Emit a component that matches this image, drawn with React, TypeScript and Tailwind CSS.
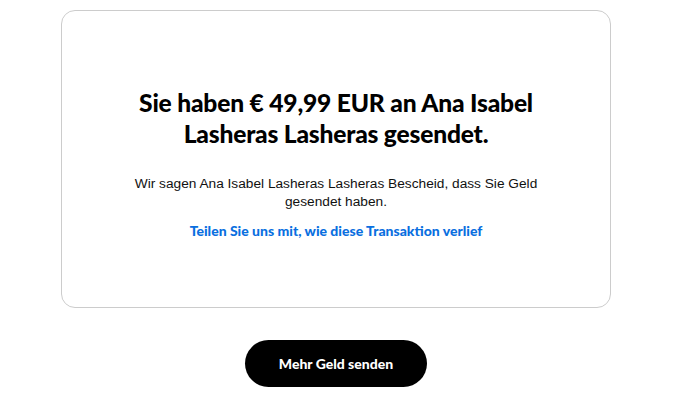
import React from "react";

export default function App() {
  return (
    <div className="w-[672px] flex flex-col items-center pt-[10px] bg-white" style={{ minHeight: 409 }}>
      <div className="w-[550px] h-[298px] border border-[#cccccc] rounded-[14px] flex flex-col items-center pt-[76px]">
        <h1 className="font-['Lato',sans-serif] font-black text-[24.6px] leading-[31px] text-black text-center max-w-[430px] tracking-[-0.2px]">
          Sie haben € 49,99 EUR an Ana Isabel Lasheras Lasheras gesendet.
        </h1>
        <p className="mt-[26px] font-['Liberation_Sans',Arial,sans-serif] text-[13.7px] leading-[18px] text-[#111111] text-center max-w-[420px]">
          Wir sagen Ana Isabel Lasheras Lasheras Bescheid, dass Sie Geld gesendet haben.
        </p>
        <a className="mt-[11px] font-['Lato',sans-serif] font-black text-[14px] leading-[18px] text-[#0a6fe0] text-center">
          Teilen Sie uns mit, wie diese Transaktion verlief
        </a>
      </div>
      <button className="mt-[32px] w-[182px] h-[47px] rounded-full bg-black text-white font-['Lato',sans-serif] font-black text-[14px] flex items-center justify-center">
        Mehr Geld senden
      </button>
    </div>
  );
}
